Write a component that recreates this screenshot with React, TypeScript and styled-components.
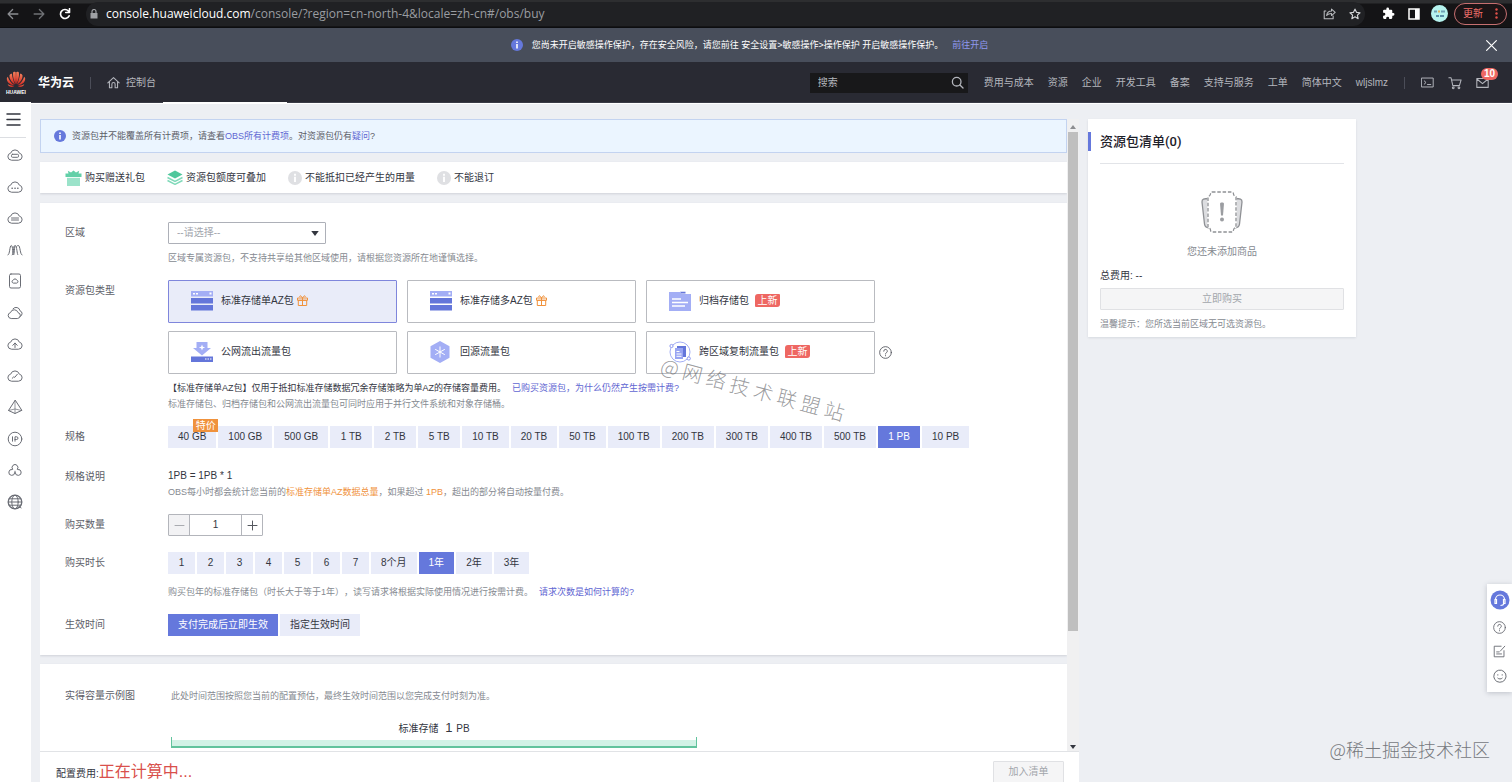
import React, { useState } from "react";
import styled, { createGlobalStyle, css } from "styled-components";

const c = {
  page: "#edeff3",
  primary: "#6578dc",
  primaryText: "#5f66d2",
  chip: "#e9ecf9",
  ink: "#33363f",
  label: "#5d6068",
  hint: "#868a91",
  orange: "#f0923c",
  red: "#ee6762",
};

const GlobalStyle = createGlobalStyle`
  * { box-sizing: border-box; }
  body {
    margin: 0;
    background: ${c.page};
    color: ${c.ink};
    font-family: "Liberation Sans", "Noto Sans CJK SC", sans-serif;
    font-size: 10px;
    line-height: 16px;
    text-spacing-trim: space-all;
  }
  button, input, select { font: inherit; color: inherit; }
  button { cursor: pointer; }
  h2, p { margin: 0; }
  a { text-decoration: none; }
  svg { display: block; flex: none; }
`;

const Page = styled.div`
  display: flex;
  flex-direction: column;
  height: 100vh;
  overflow: hidden;
  position: relative;
`;

/* ---------- browser bar ---------- */
const BrowserBar = styled.header`
  flex: none;
  display: flex;
  align-items: center;
  height: 28px;
  padding: 0 5px 0 0;
  background: linear-gradient(#2d2e30 0 3px, #141416 4px);
  border-bottom: 1px solid #0c0d10;
`;
const BrowserButton = styled.button<{ $tone?: string; $width?: number }>`
  display: grid;
  place-items: center;
  width: ${(p) => p.$width ?? 26}px;
  height: 22px;
  padding: 0;
  border: 0;
  background: none;
  color: ${(p) => p.$tone ?? "#fff"};
`;
const AddressBar = styled.div`
  flex: 1;
  display: flex;
  align-items: center;
  gap: 8px;
  height: 24px;
  margin: 0 10px 0 8px;
  padding: 0 1px 0 4px;
  border-radius: 12px;
  background: #202124;
`;
const Url = styled.span`
  flex: 1;
  font-family: "Open Sans", "Noto Sans", sans-serif;
  font-size: 12px;
  color: #9a9da1;
  b { font-weight: 400; color: #fff; }
`;
const Avatar = styled.span`
  display: grid;
  place-items: center;
  width: 17px;
  height: 17px;
  margin: 0 6px 0 4px;
  border-radius: 50%;
  background: #b5f3ee;
`;
const UpdateButton = styled.button`
  display: flex;
  align-items: center;
  justify-content: space-between;
  width: 53px;
  height: 22px;
  padding: 0 8px;
  border: 1px solid #c66f70;
  border-radius: 11px;
  background: #1b1416;
  color: #f0706b;
`;

/* ---------- notice ---------- */
const Notice = styled.div`
  flex: none;
  display: flex;
  align-items: center;
  height: 34px;
  padding: 0 14px;
  background: #484e5b;
  color: #fff;
  font-size: 9px;
`;
const NoticeBody = styled.div`
  flex: 1;
  display: flex;
  align-items: center;
  justify-content: center;
  gap: 9px;
  a { color: #8f98f0; }
`;
const CloseButton = styled.button`
  padding: 0;
  border: 0;
  background: none;
`;

/* ---------- console nav ---------- */
const NavBar = styled.nav`
  flex: none;
  display: flex;
  align-items: center;
  height: 40px;
  padding: 1px 23px 0 6px;
  background: #292a33;
  color: #b4b6bd;
`;
const Brand = styled.div`
  display: flex;
  flex-direction: column;
  align-items: center;
  gap: 1px;
  width: 20px;
  font-size: 5px;
  line-height: 6px;
  font-weight: 700;
  color: #fff;
`;
const BrandName = styled.strong`
  margin-left: 12px;
  font-size: 12px;
  color: #fff;
`;
const Divider = styled.span<{ $gap: number }>`
  width: 1px;
  height: 12px;
  margin: 0 ${(p) => p.$gap}px;
  background: #4b4d58;
`;
const NavLink = styled.a`
  display: flex;
  align-items: center;
  gap: 6px;
  color: inherit;
`;
const SearchBox = styled.label`
  display: flex;
  align-items: center;
  width: 158px;
  height: 20px;
  margin: 0 16px 0 auto;
  padding: 0 4px 0 8px;
  background: #18181a;
  input {
    flex: 1;
    min-width: 0;
    padding: 0;
    border: 0;
    outline: 0;
    background: none;
  }
  input::placeholder { color: #b4b6bd; opacity: 1; }
`;
const NavLinks = styled.div`
  display: flex;
  gap: 14px;
`;
const NavIcons = styled.div`
  display: flex;
  align-items: center;
  gap: 14px;
`;
const MailLink = styled.a`
  position: relative;
  color: inherit;
`;
const Badge = styled.span`
  position: absolute;
  left: 5px;
  top: -8px;
  width: 17px;
  height: 12px;
  border-radius: 6px;
  background: ${c.red};
  color: #fff;
  font-weight: 700;
  line-height: 12px;
  text-align: center;
`;

/* ---------- shell ---------- */
const Shell = styled.div`
  flex: 1;
  display: flex;
  min-height: 0;
`;
const Rail = styled.aside`
  flex: none;
  width: 31px;
  background: #fff;
`;
const MenuButton = styled.button`
  display: grid;
  place-items: center;
  width: 26px;
  height: 36px;
  padding: 0;
  border: 0;
  border-bottom: 1px solid #dcdee2;
  background: none;
`;
const RailList = styled.div`
  display: flex;
  flex-direction: column;
  justify-content: space-between;
  height: 363px;
  margin-top: 9px;
  padding-left: 7px;
  color: #6a6d75;
  a { color: inherit; }
`;
const Workspace = styled.div`
  flex: 1;
  display: flex;
  flex-direction: column;
  min-width: 0;
`;
const Strip = styled.div`
  flex: none;
  display: flex;
  height: 2px;
  border-bottom: 1px solid #fff;
  background: #3a3b46;
  &::before {
    content: "";
    width: 124px;
    margin-left: 132px;
    background: #fff;
  }
`;
const Columns = styled.div`
  flex: 1;
  display: flex;
  align-items: flex-start;
  gap: 9px;
  min-height: 0;
  padding: 15px 156px 0 9px;
`;
const MainColumn = styled.main`
  flex: 1;
  align-self: stretch;
  display: flex;
  flex-direction: column;
  min-width: 0;
`;
const ScrollRow = styled.div`
  flex: 1;
  display: flex;
  min-height: 0;
`;
const Scroller = styled.div`
  flex: 1;
  min-width: 0;
  overflow-y: auto;
  scrollbar-width: none;
`;
const ScrollTrack = styled.div`
  flex: none;
  display: flex;
  flex-direction: column;
  justify-content: space-between;
  align-items: center;
  width: 12px;
  padding: 6px 0 2px;
  background: #f0f0f1;
`;
const ScrollThumb = styled.div`
  width: 10px;
  height: 80%;
  margin: 3px 0 auto;
  background: #bfbfbf;
`;

/* ---------- panels ---------- */
const Alert = styled.div`
  display: flex;
  align-items: center;
  gap: 6px;
  height: 34px;
  padding: 0 13px;
  border: 1px solid #c3d3f0;
  background: #ebf5ff;
  color: ${c.label};
  font-size: 9px;
  a { color: ${c.primaryText}; }
`;
const Panel = styled.section`
  margin-top: 9px;
  background: #fff;
  box-shadow: 0 1px 2px rgba(60, 70, 90, 0.16);
`;
const Features = styled(Panel)`
  display: flex;
  align-items: center;
  gap: 22px;
  height: 31px;
  padding: 0 25px;
`;
const Feature = styled.span`
  display: flex;
  align-items: center;
  gap: 3px;
`;
const FormPanel = styled(Panel)`
  margin-top: 10px;
  padding: 19px 25px;
`;
const Row = styled.div<{ $space?: number }>`
  display: flex;
  margin-top: ${(p) => p.$space ?? 14}px;
  &:first-child { margin-top: 0; }
`;
const RowLabel = styled.label`
  flex: none;
  width: 103px;
  line-height: 22px;
  color: ${c.label};
`;
const RowBody = styled.div`
  flex: 1;
  min-width: 0;
`;
const Formula = styled.p`
  padding-top: 2px;
`;
const Hint = styled.p<{ $top?: number; $dark?: boolean }>`
  margin-top: ${(p) => p.$top ?? 0}px;
  font-size: 9px;
  line-height: 16px;
  color: ${(p) => (p.$dark ? c.ink : c.hint)};
  a { margin-left: 6px; color: ${c.primaryText}; }
  em { font-style: normal; color: ${c.orange}; }
`;
const SelectBox = styled.div`
  display: grid;
  align-items: center;
  width: 158px;
  > * { grid-area: 1 / 1; }
  svg { justify-self: end; margin-right: 7px; pointer-events: none; }
`;
const Select = styled.select`
  appearance: none;
  width: 100%;
  height: 22px;
  padding: 0 8px;
  border: 1px solid #adb0b8;
  border-radius: 1px;
  background: #fff;
  color: #a3a6ad;
`;
const TypeRow = styled.div`
  display: flex;
  align-items: flex-end;
  gap: 4px;
  color: #55585f;
`;
const TypeGrid = styled.div`
  display: grid;
  grid-template-columns: repeat(3, minmax(0, 229px));
  gap: 8px 10px;
`;
const TypeCard = styled.button<{ $active: boolean }>`
  display: flex;
  align-items: center;
  gap: 7px;
  width: 229px;
  max-width: 100%;
  height: 43px;
  padding: 0 21px 2px;
  border: 1px solid ${(p) => (p.$active ? "#7f86dc" : "#b9bbc0")};
  border-radius: 1px;
  background: ${(p) => (p.$active ? "#e9ecf9" : "#fff")};
  color: ${c.ink};
  text-align: left;
`;
const TypeName = styled.span`
  display: flex;
  align-items: center;
  gap: 3px;
`;
const NewTag = styled.span`
  width: 25px;
  height: 13px;
  margin-left: 3px;
  border-radius: 3px 1px 3px 1px;
  background: ${c.red};
  color: #fff;
  line-height: 13px;
  text-align: center;
`;
const HelpButton = styled.button`
  margin-bottom: 15px;
  padding: 0;
  border: 0;
  background: none;
`;
const Chips = styled.div`
  display: flex;
  flex-wrap: wrap;
  gap: 2px;
`;
const Chip = styled.button<{ $active: boolean }>`
  position: relative;
  min-width: 27px;
  height: 22px;
  padding: 0 10px;
  border: 0;
  white-space: nowrap;
  background: ${c.chip};
  ${(p) => p.$active && css`
    background: ${c.primary};
    color: #fff;
  `}
`;
const SizeChip = styled(Chip)`
  min-width: 42px;
`;
const DealTag = styled.span`
  position: absolute;
  right: -2px;
  top: -7px;
  z-index: 1;
  width: 25px;
  height: 13px;
  background: ${c.orange};
  color: #fff;
  line-height: 13px;
`;
const Stepper = styled.div`
  display: flex;
  width: 95px;
  height: 22px;
  border: 1px solid #b3b5bb;
  border-radius: 1px;
  input {
    flex: 1;
    min-width: 0;
    padding: 0;
    border: 1px solid #b3b5bb;
    border-width: 0 1px;
    text-align: center;
    outline: 0;
  }
  button {
    display: grid;
    place-items: center;
    width: 20px;
    padding: 0;
    border: 0;
    background: #fff;
    color: #55585f;
  }
  button:disabled { background: #f2f2f4; color: #a9abb0; }
`;
const ExamplePanel = styled(Panel)`
  padding: 21px 25px 40px;
`;
const Example = styled.div`
  margin-left: 3px;
`;
const Capacity = styled.div`
  width: 526px;
  max-width: 100%;
  text-align: center;
`;
const CapacityTitle = styled.p`
  margin-top: 16px;
  b { margin: 0 1px 0 4px; font-size: 13px; font-weight: 400; }
`;
const CapacityBar = styled.div`
  height: 11px;
  border: 1px solid #62c39d;
  border-top: 0;
  border-bottom-width: 2px;
  background: linear-gradient(#fff 0 3px, #d2f2e6 3px);
`;
const Footer = styled.footer`
  flex: none;
  display: flex;
  align-items: flex-start;
  justify-content: space-between;
  height: 31px;
  padding: 9px 15px 0 16px;
  border-top: 1px solid #e1e3e6;
  background: #fff;
`;
const Fee = styled.p`
  display: flex;
  align-items: baseline;
  line-height: 22px;
  strong { font-size: 16px; font-weight: 400; color: #d9504c; }
`;
const MutedButton = styled.button<{ $wide?: boolean }>`
  width: ${(p) => (p.$wide ? "100%" : "71px")};
  height: 22px;
  padding: 0;
  border: 1px solid #e0e1e4;
  border-radius: 1px;
  background: #f5f5f6;
  color: #a2a5ab;
`;

/* ---------- cart ---------- */
const Cart = styled.aside`
  flex: none;
  width: 268px;
  padding: 13px 12px 5px;
  background: #fff;
  box-shadow: 0 1px 2px rgba(60, 70, 90, 0.12);
`;
const CartTitle = styled.h2`
  margin-left: -12px;
  padding-left: 9px;
  border-left: 3px solid ${c.primary};
  font-family: Roboto, "Noto Sans CJK SC", sans-serif;
  font-size: 13px;
  line-height: 19px;
  font-weight: 500;
  color: #1d2029;
`;
const CartEmpty = styled.div`
  display: flex;
  flex-direction: column;
  align-items: center;
  gap: 11px;
  margin-top: 12px;
  padding-top: 27px;
  border-top: 1px solid #e2e4e8;
  color: ${c.hint};
`;
const Total = styled.p`
  margin: 8px 0 4px;
`;

/* ---------- floating pieces ---------- */
const FloatBar = styled.div`
  position: absolute;
  right: 0;
  bottom: 90px;
  display: flex;
  flex-direction: column;
  align-items: center;
  gap: 11px;
  width: 25px;
  padding: 6px 0 9px;
  background: #fff;
  box-shadow: 0 1px 5px rgba(50, 60, 80, 0.25);
  color: #666970;
  button { padding: 0; border: 0; background: none; }
`;
const TiltedMark = styled.div`
  position: absolute;
  left: 661px;
  top: 355px;
  font-family: "Noto Sans CJK SC", sans-serif;
  font-size: 20px;
  line-height: 24px;
  font-weight: 300;
  white-space: nowrap;
  color: rgba(100, 102, 106, 0.65);
  transform: rotate(15deg);
  transform-origin: 10px 12px;
  pointer-events: none;
`;
const CornerMark = styled.div`
  position: absolute;
  right: 22px;
  bottom: 20px;
  font-family: "Noto Sans CJK SC", sans-serif;
  font-size: 18px;
  line-height: 26px;
  font-weight: 300;
  color: #76787d;
  pointer-events: none;
`;

/* ---------- drawings ---------- */
type IconProps = { size?: number; box?: number; sw?: number; children: React.ReactNode };
const Line = ({ size = 16, box = 16, sw = 1, children }: IconProps) => (
  <svg width={size} height={size} viewBox={`0 0 ${box} ${box}`} fill="none" stroke="currentColor"
    strokeWidth={sw} strokeLinecap="round" strokeLinejoin="round" aria-hidden="true">
    {children}
  </svg>
);

const InfoDot = ({ fill, size = 12, mark = "#fff" }: { fill: string; size?: number; mark?: string }) => (
  <svg width={size} height={size} viewBox="0 0 12 12" aria-hidden="true">
    <circle cx="6" cy="6" r="6" fill={fill} />
    <path d="M5.2 2.4h1.6V4H5.2zM5.2 4.9h1.6v4.6H5.2z" fill={mark} />
  </svg>
);

const HelpIcon = () => (
  <Line size={13} sw={1.1}>
    <circle cx="8" cy="8" r="7.2" />
    <path d="M5.8 6.4a2.2 2.2 0 1 1 3.3 1.9c-.8.5-1.1.8-1.1 1.6M8 11.8v.3" />
  </Line>
);

const HuaweiMark = () => (
  <svg width="20" height="17" viewBox="0 0 20 17" aria-hidden="true">
    <defs>
      <linearGradient id="petal" x1="0" y1="0" x2="0" y2="1">
        <stop offset="0" stopColor="#f2805c" />
        <stop offset="1" stopColor="#d5221c" />
      </linearGradient>
    </defs>
    <g fill="url(#petal)">
      <path d="M9.600 13.200C8 10 6.300 5 7.200 1.200 8.600.4 9.500.6 9.700 1.500 10.100 5 9.900 9.500 9.600 13.200z" />
      <path d="M10.400 13.200C12 10 13.700 5 12.800 1.200 11.400.4 10.500.6 10.300 1.500 9.900 5 10.100 9.500 10.400 13.200z" />
      <path d="M9 13.500C5.800 11.500 3.200 8 3.500 4.200 4.300 3 5.300 2.600 5.900 2.800 6.200 6.500 7.600 10.500 9 13.500z" />
      <path d="M11 13.500c3.200-2 5.800-5.500 5.500-9.300-.8-1.200-1.800-1.600-2.400-1.400-.3 3.700-1.700 7.700-3.100 10.700z" />
      <path d="M8.500 14.200C4.500 14.200.8 11.500.8 7.500c.2-.9.6-1.500 1-1.800C3 9.500 5.500 12.500 8.500 14.200z" />
      <path d="M11.500 14.200c4 0 7.700-2.700 7.700-6.700-.2-.9-.6-1.500-1-1.800-1.200 3.800-3.700 6.800-6.700 8.500z" />
      <path d="M8.300 15C6 16.500 3 16.300 1.700 13.300c2 1.200 4.400 1.600 6.600 1.700z" />
      <path d="M11.700 15c2.300 1.500 5.300 1.300 6.600-1.700-2 1.200-4.400 1.600-6.600 1.700z" />
    </g>
  </svg>
);

const cloud = "M4.200 13.200a3.600 3.600 0 0 1-.5-7.100 4.500 4.500 0 0 1 8.600 0 3.600 3.600 0 0 1-.5 7.100z";
const railIcons: { name: string; art: React.ReactNode }[] = [
  { name: "弹性云服务器", art: <><path d={cloud} /><rect x="4.500" y="7.300" width="7" height="3" rx="1" /></> },
  { name: "云耀服务器", art: <><path d={cloud} /><path d="M5 9.300h.3M7.900 9.300h.3M10.700 9.300h.3" strokeWidth="1.400" /></> },
  { name: "裸金属服务器", art: <><path d={cloud} /><path d="M4.500 8h7M4.500 10h7" /></> },
  { name: "弹性伸缩", art: <path d="M1 13C3 13 2.500 3.500 4.300 3.500S5.500 13 6.500 13 7.200 3.500 8.500 3.500 10 13 10.800 13M5.200 13C7 13 6 3.500 7.300 3.500M10 4c.4-.5.8-.5 1.400-.5C13.200 3.500 13 13 15 13" /> },
  { name: "专属主机", art: <><rect x="2.500" y="1" width="11" height="14" rx="1.500" /><path d="M6 10a1.400 1.400 0 0 1 .1-2.700 2 2 0 0 1 3.800 0A1.400 1.400 0 0 1 10 10z" /></> },
  { name: "云硬盘", art: <><path d="M3.800 13.500a3 3 0 0 1-.3-5.900 3.900 3.900 0 0 1 7.500 0 3 3 0 0 1-.3 5.900z" /><path d="M6 3.800a4 4 0 0 1 7 2 3 3 0 0 1 0 5.700" /></> },
  { name: "云备份", art: <><path d={cloud} /><path d="M5.800 9.300 8 7l2.200 2.300M8 7.200v4.300" /></> },
  { name: "对象存储", art: <><path d={cloud} /><path d="M5.200 10.300 6.500 9l1.300.3 2.500-3" /></> },
  { name: "虚拟私有云", art: <><path d="M8 1.500 1.500 11.500 8 14.500l6.500-3z" /><path d="M8 1.500v13M1.500 11.500l6.500-1.500 6.500 1.500" strokeWidth=".7" /></> },
  { name: "弹性公网IP", art: <><circle cx="8" cy="8" r="6.800" /><path d="M5.500 5.800v4.400M8 10.200V5.800h1.600a1.300 1.300 0 0 1 0 2.700H8" /></> },
  { name: "云容器引擎", art: <><path d="M5.500 7.200a3 3 0 1 1 5 0M7.800 10.800a3 3 0 1 1-2.600-3.400M8.200 10.800a3 3 0 1 0 2.600-3.400M8 9.200v1.600" /></> },
  { name: "域名注册", art: <><circle cx="8" cy="8" r="6.800" strokeWidth="1.300" /><ellipse cx="8" cy="8" rx="3.200" ry="6.800" /><path d="M1.300 8h13.400M2.200 4.800h11.600M2.200 11.200h11.600M11 12.500l1 1.500 1-1.500 1 1.500" /></> },
];

const DiskArt = () => (
  <svg width="24" height="20" viewBox="0 0 24 20" aria-hidden="true">
    <path d="M1 0h22v5.500H1z" fill="#a3aef5" />
    <path d="M1 7h22v5.500H1zM1 14h22v5.500H1z" fill="#6476da" />
    <path d="M3 2h2v1.500H3zM6 2h2v1.500H6zM19.500 1.500h2v2h-2z" fill="#fff" />
  </svg>
);
const DownloadArt = () => (
  <svg width="24" height="20" viewBox="0 0 24 20" aria-hidden="true">
    <path d="M6.500 0h11v6h3.500l-9 7.500L3 6h3.500z" fill="#a3aef5" />
    <path d="m12 2.500.9 2.200 2.300.8-2.300.8L12 8.500l-.9-2.200-2.300-.8 2.300-.8z" fill="#fff" />
    <path d="M1 14.500h22V20H1z" fill="#6476da" />
    <path d="M15 17h1.500M17.500 17H19M20 17h1.500" stroke="#fff" />
  </svg>
);
const FolderArt = () => (
  <svg width="24" height="20" viewBox="0 0 24 20" aria-hidden="true">
    <path d="M1 1h11l2 2h9v17H1z" fill="#a3aef5" />
    <path d="M12 .8h5.500v1.700H13.500z" fill="#6476da" />
    <path d="M4 8h9M4 11.500h16M4 15h13" stroke="#fff" strokeWidth="1.600" />
  </svg>
);
const HexArt = () => (
  <svg width="24" height="22" viewBox="0 0 24 22" aria-hidden="true">
    <path d="M11 0l9.500 5.200v11.600L11 22 1.500 16.800V5.200z" fill="#a3aef5" />
    <path d="M11 5.500v11M6.200 8.300l9.600 5.400M15.800 8.300l-9.600 5.400" stroke="#fff" strokeWidth="1" />
  </svg>
);
const CopyArt = () => (
  <svg width="24" height="22" viewBox="0 0 24 22" fill="none" aria-hidden="true">
    <circle cx="12" cy="11" r="10" stroke="#a3aef5" />
    <path d="M9 5h9v11h-3V8H9z" fill="#6476da" />
    <path d="M7 7h8v11H7z" fill="#98a4f2" />
    <path d="M8.500 10.500h3M8.500 13h5M8.500 15.300h5" stroke="#fff" />
    <circle cx="3.500" cy="5" r="1.600" fill="#fff" stroke="#8f9af0" />
    <circle cx="20.800" cy="17.500" r="1.600" fill="#fff" stroke="#8f9af0" />
  </svg>
);
const GiftOutline = () => (
  <svg width="11" height="11" viewBox="0 0 11 11" fill="none" stroke={c.orange} aria-hidden="true">
    <path d="M.5 3h10v2.300H.5zM1.300 5.300h8.400v5.200H1.300zM5.500 3v7.500M5.500 3C4 .2 2.500.3 2.800 2M5.500 3C7 .2 8.500.3 8.200 2" />
  </svg>
);
const GiftSolid = () => (
  <svg width="17" height="16" viewBox="0 0 17 16" aria-hidden="true">
    <path d="M.5 3.500h3L2.800.8 6 2.500 8.500.5 11 2.500 14.200.8l-.7 2.700h3V7H.5z" fill="#62d0a8" />
    <path d="M2 7.800h13V16H2z" fill="#9be3ca" />
  </svg>
);
const Layers = () => (
  <svg width="16" height="15" viewBox="0 0 16 15" fill="none" aria-hidden="true">
    <path d="M8 .5 15.500 4.500 8 8.500.5 4.500z" fill="#4fc79c" />
    <path d="M.5 7.500 8 11.300l7.500-3.800M.5 10.500 8 14.300l7.500-3.800" stroke="#7fd9b9" strokeWidth="1.500" />
  </svg>
);
const EmptyArt = () => (
  <svg width="42" height="42" viewBox="0 0 42 42" fill="none" stroke="#8f9195" strokeWidth="1.300" aria-hidden="true">
    <path d="M8 7.500C3 7.500.8 8 1 11l2.500 22c.3 3 2 4 5.500 4zM34 7.500c5 0 7.200.5 7 3.500l-2.500 22c-.3 3-2 4-5.500 4z" fill="#dcdde0" />
    <path d="M10 1.500h22l.8 3 2.200 1.500v30l-2.200 1.500-.8 3H10l-.8-3L7 36V6l2.200-1.500z" fill="#fff" stroke="#fff" />
    <path d="M11 1h20c1 0 1.300.6 1.500 2 .2 1.700 1.500 2.200 2.500 2.700v30.600c-1 .5-2.300 1-2.500 2.700-.2 1.400-.5 2-1.500 2H11c-1 0-1.300-.6-1.500-2-.2-1.700-1.500-2.200-2.500-2.700V5.700c1-.5 2.300-1 2.500-2.700C9.700 1.600 10 1 11 1z" strokeDasharray="3.500 1.800" />
    <path d="M19 12.500c0-1.500 4-1.500 4 0l-1 12h-2z" fill="#9b9da1" stroke="none" />
    <circle cx="21" cy="28.500" r="2" fill="#9b9da1" stroke="none" />
  </svg>
);
const Caret = ({ up, wide, color = "#33363f" }: { up?: boolean; wide?: boolean; color?: string }) => (
  <svg width={wide ? 8 : 6} height={wide ? 5 : 4} viewBox="0 0 6 4" aria-hidden="true">
    <path d={up ? "M0 4 3 0l3 4z" : "M0 0h6L3 4z"} fill={color} />
  </svg>
);

/* ---------- data ---------- */
const navLinks = ["费用与成本", "资源", "企业", "开发工具", "备案", "支持与服务", "工单", "简体中文", "wljslmz"];
const types = [
  { name: "标准存储单AZ包", art: <DiskArt />, gift: true },
  { name: "标准存储多AZ包", art: <DiskArt />, gift: true },
  { name: "归档存储包", art: <FolderArt />, fresh: true },
  { name: "公网流出流量包", art: <DownloadArt /> },
  { name: "回源流量包", art: <HexArt /> },
  { name: "跨区域复制流量包", art: <CopyArt />, fresh: true },
];
const sizes = ["40 GB", "100 GB", "500 GB", "1 TB", "2 TB", "5 TB", "10 TB", "20 TB", "50 TB", "100 TB", "200 TB", "300 TB", "400 TB", "500 TB", "1 PB", "10 PB"];
const durations = ["1", "2", "3", "4", "5", "6", "7", "8个月", "1年", "2年", "3年"];
const starts = ["支付完成后立即生效", "指定生效时间"];

export default function App() {
  const [type, setType] = useState(types[0].name);
  const [size, setSize] = useState("1 PB");
  const [duration, setDuration] = useState("1年");
  const [start, setStart] = useState(starts[0]);
  const [count, setCount] = useState(1);

  return (
    <>
      <GlobalStyle />
      <Page>
        <BrowserBar>
          <BrowserButton aria-label="后退" $tone="#8b8d91">
            <Line size={12} sw={1.700}><path d="M14.500 8h-13M7.500 2 1.500 8l6 6" /></Line>
          </BrowserButton>
          <BrowserButton aria-label="前进" $tone="#6f7175">
            <Line size={12} sw={1.700}><path d="M1.500 8h13M8.500 2l6 6-6 6" /></Line>
          </BrowserButton>
          <BrowserButton aria-label="刷新">
            <Line size={12} sw={2.200}><path d="M13.500 10.500A6 6 0 1 1 12.500 4M14 1v5H9" /></Line>
          </BrowserButton>
          <AddressBar>
            <svg width="8" height="10" viewBox="0 0 8 10" aria-hidden="true">
              <path d="M.5 4h7v5.500h-7z" fill="#9fa1a5" />
              <path d="M2 4V2.500a2 2 0 0 1 4 0V4" fill="none" stroke="#9fa1a5" strokeWidth="1.200" />
            </svg>
            <Url><b>console.huaweicloud.com</b>/console/?region=cn-north-4&amp;locale=zh-cn#/obs/buy</Url>
            <BrowserButton aria-label="分享" $tone="#b9bbbf" $width={18}>
              <Line size={13} sw={1.300}><path d="M3.500 5H1.500v9.500h11V11M4.500 10.500c.5-4 3-5.500 6-5.500V2.500L15 6.500l-4.500 4V8c-2.500 0-4.500.5-6 2.500z" /></Line>
            </BrowserButton>
            <BrowserButton aria-label="收藏" $tone="#d5d7da" $width={18}>
              <Line size={12} sw={1.500}><path d="m8 1.500 2 4.300 4.700.5-3.500 3.200 1 4.700L8 11.800l-4.200 2.400 1-4.700L1.300 6.300 6 5.800z" /></Line>
            </BrowserButton>
          </AddressBar>
          <BrowserButton aria-label="扩展程序">
            <svg width="13" height="13" viewBox="0 0 24 24" fill="#fff"><path d="M20.500 11H19V7a2 2 0 0 0-2-2h-4V3.500a2.500 2.500 0 0 0-5 0V5H4a2 2 0 0 0-2 2v3.800h1.500a2.700 2.700 0 0 1 0 5.400H2V20a2 2 0 0 0 2 2h3.800v-1.500a2.700 2.700 0 0 1 5.400 0V22H17a2 2 0 0 0 2-2v-4h1.500a2.500 2.500 0 0 0 0-5z" /></svg>
          </BrowserButton>
          <BrowserButton aria-label="侧边栏">
            <svg width="12" height="12" viewBox="0 0 12 12"><path d="M1 1h10v10H1z" fill="none" stroke="#fff" strokeWidth="1.500" /><path d="M7 1h4v10H7z" fill="#fff" /></svg>
          </BrowserButton>
          <Avatar>
            <svg width="12" height="8" viewBox="0 0 12 8" aria-hidden="true">
              <path d="M0 1.500h3M7 1.500h4" stroke="#6fa2b5" strokeWidth="2" />
              <path d="M4 1.500h2" stroke="#e0b35f" strokeWidth="2" />
              <path d="M2 6h3M6 6h4" stroke="#5a8fa8" strokeWidth="2" />
            </svg>
          </Avatar>
          <UpdateButton>
            更新
            <svg width="3" height="11" viewBox="0 0 3 11" fill="#e0504a" aria-hidden="true">
              <circle cx="1.500" cy="1.500" r="1.200" /><circle cx="1.500" cy="5.500" r="1.200" /><circle cx="1.500" cy="9.500" r="1.200" />
            </svg>
          </UpdateButton>
        </BrowserBar>

        <Notice>
          <NoticeBody>
            <InfoDot fill={c.primary} size={12} />
            <span>您尚未开启敏感操作保护，存在安全风险，请您前往 安全设置&gt;敏感操作&gt;操作保护 开启敏感操作保护。</span>
            <a href="#enable">前往开启</a>
          </NoticeBody>
          <CloseButton aria-label="关闭"><Line size={13} sw={1.500}><path d="m2 2 12 12M14 2 2 14" /></Line></CloseButton>
        </Notice>

        <NavBar>
          <Brand><HuaweiMark />HUAWEI</Brand>
          <BrandName>华为云</BrandName>
          <Divider $gap={16} />
          <NavLink href="#console">
            <Line size={13} sw={1.300}><path d="M1 8.500 8 2l7 6.500M3 7v7.500h3V10a2 2 0 0 1 4 0v4.500h3V7" /></Line>
            控制台
          </NavLink>
          <SearchBox>
            <input type="search" placeholder="搜索" aria-label="搜索" />
            <Line size={13} sw={1.600}><circle cx="7" cy="7" r="5.300" /><path d="m11 11 3.800 3.800" /></Line>
          </SearchBox>
          <NavLinks>
            {navLinks.map((t) => <NavLink key={t} href="#nav">{t}</NavLink>)}
          </NavLinks>
          <Divider $gap={16} />
          <NavIcons>
            <Line size={13} sw={1.200}><path d="M1 2.500h14v11H1zM4 6l2.200 2L4 10M8 10.500h4" /></Line>
            <Line size={14} sw={1.200}><path d="M1 2h2.500l2 9h7.500L15 4.500H4" /><circle cx="6" cy="13.500" r="1" /><circle cx="12.500" cy="13.500" r="1" /></Line>
            <MailLink href="#messages" aria-label="消息 10">
              <Line size={13} sw={1.300}><path d="M1 3h14v11H1zM1.500 4 8 9.500 14.500 4" /></Line>
              <Badge>10</Badge>
            </MailLink>
          </NavIcons>
        </NavBar>

        <Shell>
          <Rail>
            <MenuButton aria-label="服务列表">
              <Line size={15} box={15} sw={1.500}><path d="M1 2h13M1 7.500h13M1 13h13" /></Line>
            </MenuButton>
            <RailList>
              {railIcons.map((r) => (
                <a key={r.name} href="#service" aria-label={r.name}><Line>{r.art}</Line></a>
              ))}
            </RailList>
          </Rail>
          <Workspace>
            <Strip />
            <Columns>
              <MainColumn>
                <ScrollRow>
                  <Scroller>
                    <Alert>
                      <InfoDot fill={c.primary} />
                      <span>资源包并不能覆盖所有计费项，请查看<a href="#items">OBS所有计费项</a>。对资源包仍有<a href="#faq">疑问</a>?</span>
                    </Alert>
                    <Features>
                      <Feature><GiftSolid />购买赠送礼包</Feature>
                      <Feature><Layers />资源包额度可叠加</Feature>
                      <Feature><InfoDot fill="#dfe0e3" size={14} />不能抵扣已经产生的用量</Feature>
                      <Feature><InfoDot fill="#dfe0e3" size={14} />不能退订</Feature>
                    </Features>

                    <FormPanel>
                      <Row>
                        <RowLabel htmlFor="region">区域</RowLabel>
                        <RowBody>
                          <SelectBox>
                            <Select id="region"><option>--请选择--</option></Select>
                            <Caret wide />
                          </SelectBox>
                          <Hint $top={6}>区域专属资源包，不支持共享给其他区域使用，请根据您资源所在地谨慎选择。</Hint>
                        </RowBody>
                      </Row>
                      <Row>
                        <RowLabel as="span">资源包类型</RowLabel>
                        <RowBody>
                          <TypeRow>
                            <TypeGrid>
                              {types.map((t) => (
                                <TypeCard key={t.name} $active={t.name === type} aria-pressed={t.name === type} onClick={() => setType(t.name)}>
                                  {t.art}
                                  <TypeName>{t.name}{t.gift && <GiftOutline />}{t.fresh && <NewTag>上新</NewTag>}</TypeName>
                                </TypeCard>
                              ))}
                            </TypeGrid>
                            <HelpButton aria-label="帮助"><HelpIcon /></HelpButton>
                          </TypeRow>
                          <Hint $top={6} $dark>【标准存储单AZ包】仅用于抵扣标准存储数据冗余存储策略为单AZ的存储容量费用。<a href="#why">已购买资源包，为什么仍然产生按需计费?</a></Hint>
                          <Hint>标准存储包、归档存储包和公网流出流量包可同时应用于并行文件系统和对象存储桶。</Hint>
                        </RowBody>
                      </Row>
                      <Row>
                        <RowLabel as="span">规格</RowLabel>
                        <RowBody>
                          <Chips>
                            {sizes.map((s, i) => (
                              <SizeChip key={s} $active={s === size} aria-pressed={s === size} onClick={() => setSize(s)}>
                                {s}{i === 0 && <DealTag>特价</DealTag>}
                              </SizeChip>
                            ))}
                          </Chips>
                        </RowBody>
                      </Row>
                      <Row $space={18}>
                        <RowLabel as="span">规格说明</RowLabel>
                        <RowBody>
                          <Formula>1PB = 1PB * 1</Formula>
                          <Hint>OBS每小时都会统计您当前的<em>标准存储单AZ数据总量</em>，如果超过 <em>1PB</em>，超出的部分将自动按量付费。</Hint>
                        </RowBody>
                      </Row>
                      <Row>
                        <RowLabel htmlFor="count">购买数量</RowLabel>
                        <RowBody>
                          <Stepper>
                            <button aria-label="减少" disabled={count === 1} onClick={() => setCount(count - 1)}>
                              <Line size={11} box={11}><path d="M1 5.500h9" /></Line>
                            </button>
                            <input id="count" value={count} onChange={(e) => setCount(Number(e.target.value) || 1)} />
                            <button aria-label="增加" onClick={() => setCount(count + 1)}>
                              <Line size={11} box={11}><path d="M1 5.500h9M5.500 1v9" /></Line>
                            </button>
                          </Stepper>
                        </RowBody>
                      </Row>
                      <Row $space={16}>
                        <RowLabel as="span">购买时长</RowLabel>
                        <RowBody>
                          <Chips>
                            {durations.map((d) => (
                              <Chip key={d} $active={d === duration} aria-pressed={d === duration} onClick={() => setDuration(d)}>{d}</Chip>
                            ))}
                          </Chips>
                          <Hint $top={10}>购买包年的标准存储包（时长大于等于1年），读写请求将根据实际使用情况进行按需计费。<a href="#count">请求次数是如何计算的?</a></Hint>
                        </RowBody>
                      </Row>
                      <Row>
                        <RowLabel as="span">生效时间</RowLabel>
                        <RowBody>
                          <Chips>
                            {starts.map((s) => (
                              <Chip key={s} $active={s === start} aria-pressed={s === start} onClick={() => setStart(s)}>{s}</Chip>
                            ))}
                          </Chips>
                        </RowBody>
                      </Row>
                    </FormPanel>

                    <ExamplePanel>
                      <Row>
                        <RowLabel as="span">实得容量示例图</RowLabel>
                        <RowBody>
                          <Example>
                            <Hint $top={3}>此处时间范围按照您当前的配置预估，最终生效时间范围以您完成支付时刻为准。</Hint>
                            <Capacity>
                              <CapacityTitle>标准存储 <b>1</b> PB</CapacityTitle>
                              <CapacityBar />
                            </Capacity>
                          </Example>
                        </RowBody>
                      </Row>
                    </ExamplePanel>
                  </Scroller>
                  <ScrollTrack>
                    <Caret up color="#8c8d90" />
                    <ScrollThumb />
                    <Caret />
                  </ScrollTrack>
                </ScrollRow>
                <Footer>
                  <Fee>配置费用: <strong>正在计算中...</strong></Fee>
                  <MutedButton disabled>加入清单</MutedButton>
                </Footer>
              </MainColumn>

              <Cart>
                <CartTitle>资源包清单(0)</CartTitle>
                <CartEmpty><EmptyArt />您还未添加商品</CartEmpty>
                <Total>总费用: --</Total>
                <MutedButton $wide disabled>立即购买</MutedButton>
                <Hint $top={6}>温馨提示：您所选当前区域无可选资源包。</Hint>
              </Cart>
            </Columns>
          </Workspace>
        </Shell>

        <FloatBar>
          <button aria-label="在线客服">
            <svg width="20" height="20" viewBox="0 0 20 20" fill="none" stroke="#fff" strokeWidth="1.200">
              <circle cx="10" cy="10" r="9.500" fill={c.primary} stroke="none" />
              <path d="M5.500 9.500a4.500 4.500 0 0 1 9 0M5 9.500h1.500v4H5zM13.500 9.500H15v4h-1.500zM14 13.500c-.5 1.500-1.500 2-3.500 2" />
            </svg>
          </button>
          <button aria-label="帮助"><HelpIcon /></button>
          <button aria-label="反馈"><Line size={13} sw={1.100}><path d="M10 1.500H1.500v13h12V7M14.500 1.500 9 7.500M4.500 8.500h3M4.500 11h6" /></Line></button>
          <button aria-label="满意度"><Line size={14} sw={1.100}><path d="M13.500 12.500a7 7 0 1 1 1.400-3.500l-1 2.500zM5.500 6.500v.5M10.500 6.500v.5M5.500 10.500c1.200 1.300 3.800 1.300 5 0" /></Line></button>
        </FloatBar>
        <TiltedMark>@ 网 络 技 术 联 盟 站</TiltedMark>
        <CornerMark>@稀土掘金技术社区</CornerMark>
      </Page>
    </>
  );
}
